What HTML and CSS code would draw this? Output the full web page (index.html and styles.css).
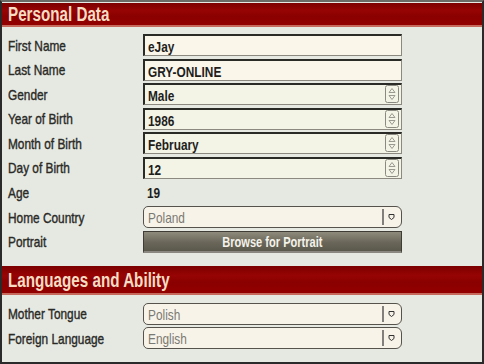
FILE: index.html
```html
<!DOCTYPE html>
<html>
<head>
<title>Personal Data</title>
<meta charset="UTF-8">
<link rel="stylesheet" href="styles.css">
</head>
<body>
<div class="frame">
  <div class="panel-title"><span class="t">Personal Data</span></div>
  <div class="form-grid">
    <div class="label"><span class="t">First Name</span></div>
    <div class="field text"><span class="t">eJay</span></div>

    <div class="label"><span class="t">Last Name</span></div>
    <div class="field text"><span class="t">GRY-ONLINE</span></div>

    <div class="label"><span class="t">Gender</span></div>
    <div class="field spin"><span class="t">Male</span>
      <svg class="spinner" width="14" height="18" viewBox="0 0 14 18"><rect x="0.5" y="0.5" width="13" height="17" rx="2" fill="none" stroke="#8a8a80"/><path d="M4 7.5 L7 3.5 L10 7.5 Z M4 10.5 L7 14.5 L10 10.5 Z" fill="none" stroke="#9a9a90"/></svg>
    </div>

    <div class="label"><span class="t">Year of Birth</span></div>
    <div class="field spin"><span class="t">1986</span>
      <svg class="spinner" width="14" height="18" viewBox="0 0 14 18"><rect x="0.5" y="0.5" width="13" height="17" rx="2" fill="none" stroke="#8a8a80"/><path d="M4 7.5 L7 3.5 L10 7.5 Z M4 10.5 L7 14.5 L10 10.5 Z" fill="none" stroke="#9a9a90"/></svg>
    </div>

    <div class="label"><span class="t">Month of Birth</span></div>
    <div class="field spin"><span class="t">February</span>
      <svg class="spinner" width="14" height="18" viewBox="0 0 14 18"><rect x="0.5" y="0.5" width="13" height="17" rx="2" fill="none" stroke="#8a8a80"/><path d="M4 7.5 L7 3.5 L10 7.5 Z M4 10.5 L7 14.5 L10 10.5 Z" fill="none" stroke="#9a9a90"/></svg>
    </div>

    <div class="label"><span class="t">Day of Birth</span></div>
    <div class="field spin"><span class="t">12</span>
      <svg class="spinner" width="14" height="18" viewBox="0 0 14 18"><rect x="0.5" y="0.5" width="13" height="17" rx="2" fill="none" stroke="#8a8a80"/><path d="M4 7.5 L7 3.5 L10 7.5 Z M4 10.5 L7 14.5 L10 10.5 Z" fill="none" stroke="#9a9a90"/></svg>
    </div>

    <div class="label"><span class="t">Age</span></div>
    <div class="value"><span class="t">19</span></div>

    <div class="label"><span class="t">Home Country</span></div>
    <div class="field select"><span class="t">Poland</span>
      <svg class="drop" width="18" height="18" viewBox="0 0 18 18"><path d="M1 1 L1 17" stroke="#333" stroke-width="1.2"/><path d="M7 6.5 L12 6.5 L12 9.5 L9.5 11.5 L7 9.5 Z" fill="#f5f1e6" stroke="#333"/></svg>
    </div>

    <div class="label"><span class="t">Portrait</span></div>
    <div class="browse"><span class="t">Browse for Portrait</span></div>
  </div>

  <div class="panel-title second"><span class="t">Languages and Ability</span></div>
  <div class="form-grid">
    <div class="label"><span class="t">Mother Tongue</span></div>
    <div class="field select"><span class="t">Polish</span>
      <svg class="drop" width="18" height="18" viewBox="0 0 18 18"><path d="M1 1 L1 17" stroke="#333" stroke-width="1.2"/><path d="M7 6.5 L12 6.5 L12 9.5 L9.5 11.5 L7 9.5 Z" fill="#f5f1e6" stroke="#333"/></svg>
    </div>

    <div class="label"><span class="t">Foreign Language</span></div>
    <div class="field select"><span class="t">English</span>
      <svg class="drop" width="18" height="18" viewBox="0 0 18 18"><path d="M1 1 L1 17" stroke="#333" stroke-width="1.2"/><path d="M7 6.5 L12 6.5 L12 9.5 L9.5 11.5 L7 9.5 Z" fill="#f5f1e6" stroke="#333"/></svg>
    </div>
  </div>
</div>
</body>
</html>
```

FILE: styles.css
```css
body {
  margin: 0;
  background-color: #1a1a1a;
  font-family: "Liberation Sans", Arial, sans-serif;
}
/* narrow face: squeeze Arial-width text the way Arial Narrow would look */
.t {
  display: inline-block;
  transform: scaleX(0.79);
  transform-origin: left center;
  white-space: nowrap;
}
.frame {
  width: 480px;
  height: 360px;
  border: 2px solid #2a2a2a;
  border-top-color: #6a6a66;
  background-color: #e6e9e2;
  overflow: hidden;
}
.panel-title {
  height: 22px;
  margin-top: 1px;
  padding-left: 6px;
  line-height: 23px;
  font-size: 20px;
  font-weight: bold;
  color: #f7dcc4;
  background: linear-gradient(#7c0000, #970404 35%, #8a0000 60%, #930000);
  border-bottom: 2px solid #c76a5e;
}
.panel-title .t {
  transform: scaleX(0.76);
}
.panel-title.second {
  height: 27px;
  line-height: 28px;
  margin-top: 13px;
}
.form-grid {
  display: grid;
  grid-template-columns: 135px 259px;
  grid-auto-rows: 22px;
  row-gap: 2.6px;
  padding: 7px 0 0 6px;
  align-items: center;
}
.second + .form-grid {
  padding-top: 8px;
}
.label {
  font-size: 15px;
  color: #2a2a27;
  -webkit-text-stroke: 0.4px #2a2a27;
}
.field {
  position: relative;
  height: 22px;
  box-sizing: border-box;
  padding-left: 3px;
  line-height: 21px;
  font-size: 15px;
  font-weight: bold;
  color: #1e1e1c;
  background-color: #f8f4e8;
  border: 1px solid #8c8a80;
  border-top: 2px solid #2a2a26;
  border-left: 2px solid #2a2a26;
}
.field.text {
  background-color: #fbf6ea;
}
.field.spin {
  background-color: #f3f3e6;
}
.spinner {
  position: absolute;
  right: 2px;
  top: 0px;
}
.value {
  padding-left: 4px;
  font-size: 15px;
  font-weight: bold;
  color: #1e1e1c;
}
.field.select {
  padding-left: 4px;
  font-weight: normal;
  color: #7a7a74;
  border: 1px solid #55534c;
  border-radius: 5px 6px 6px 5px;
  background-color: #f8f3e8;
  line-height: 21px;
}
.drop {
  position: absolute;
  right: 1px;
  top: 1px;
}
.browse {
  height: 22px;
  box-sizing: border-box;
  line-height: 21px;
  text-align: center;
  font-size: 14px;
  font-weight: bold;
  color: #f4f2ea;
  background: linear-gradient(#8e8b7c, #6a675a 55%, #5a584c);
  border: 1px solid #3e3c35;
  border-bottom: 2px solid #8a8880;
}
.browse .t {
  transform-origin: center;
}
```
